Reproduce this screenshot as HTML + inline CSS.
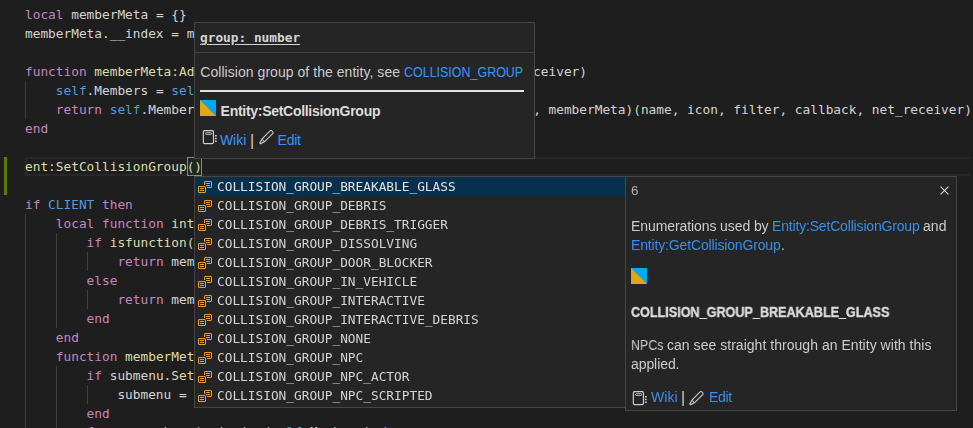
<!DOCTYPE html>
<html lang="en"><head><meta charset="utf-8"><title>editor</title>
<style>
html,body{margin:0;padding:0;overflow:hidden;}
body{width:973px;height:428px;overflow:hidden;background:#1e1e1e;position:relative;}
.a{position:absolute;}
.m{font-family:'DejaVu Sans Mono', 'Liberation Mono', monospace;font-size:12.8px;letter-spacing:-0.0063px;line-height:19px;height:19px;white-space:pre;color:#d4d4d4;}
.ln{position:absolute;left:25px;}
.g{position:absolute;width:1px;background:#404040;}
.t{position:absolute;white-space:pre;font-family:'Liberation Sans', 'DejaVu Sans', sans-serif;font-size:14px;line-height:19px;height:19px;color:#cccccc;}
.row{position:absolute;left:0;width:430px;height:19px;}
.row .tx{position:absolute;left:22px;top:0;}
.row svg{position:absolute;left:2px;top:1.5px;}
.box{position:absolute;background:#252526;border:1px solid #454545;}
.gs{will-change:transform;}
</style></head><body>
<div class="a" style="left:25px;top:157px;width:944px;height:15px;border:2px solid #282828;border-right:none;"></div>
<div class="a" style="left:4px;top:157px;width:3px;height:38px;background:#587c0c;"></div>
<div class="g" style="left:25px;top:81px;height:38px;"></div>
<div class="g" style="left:25px;top:214px;height:228px;"></div>
<div class="g" style="left:56px;top:233px;height:95px;"></div>
<div class="g" style="left:56px;top:366px;height:76px;"></div>
<div class="g" style="left:87px;top:252px;height:19px;"></div>
<div class="g" style="left:87px;top:290px;height:19px;"></div>
<div class="g" style="left:87px;top:385px;height:19px;"></div>
<div class="a" style="left:187px;top:157px;width:13px;height:17px;border:1px solid #888;background:#1b2a1b;"></div>
<div class="ln m" style="top:5px"><span style="color:#C586C0">local</span> memberMeta = {}</div>
<div class="ln m" style="top:24px">memberMeta.__index = memberMeta</div>
<div class="ln m" style="top:62px"><span style="color:#C586C0">function</span><span style="color:#DCDCAA"> memberMeta:AddMember</span>(name, icon, filter, callback, net_receiver)</div>
<div class="ln m" style="top:81px">    <span style="color:#569CD6">self</span>.Members = <span style="color:#569CD6">self</span>.Members <span style="color:#C586C0">or</span> {}</div>
<div class="ln m" style="top:100px">    <span style="color:#C586C0">return</span> <span style="color:#569CD6">self</span>.Members[table.insert(<span style="color:#569CD6">self</span>.Members, <span style="color:#DCDCAA">setmetatable</span>({}, memberMeta)(name, icon, filter, callback, net_receiver)</div>
<div class="ln m" style="top:119px"><span style="color:#C586C0">end</span></div>
<div class="ln m" style="top:157px"><span style="color:#DCDCAA">ent:SetCollisionGroup</span>()</div>
<div class="ln m" style="top:195px"><span style="color:#C586C0">if</span> <span style="color:#569CD6">CLIENT</span> <span style="color:#C586C0">then</span></div>
<div class="ln m" style="top:214px">    <span style="color:#C586C0">local</span> <span style="color:#C586C0">function</span> <span style="color:#DCDCAA">internalCallback</span>(member)</div>
<div class="ln m" style="top:233px">        <span style="color:#C586C0">if</span> <span style="color:#DCDCAA">isfunction</span>(member.callback) <span style="color:#C586C0">then</span></div>
<div class="ln m" style="top:252px">            <span style="color:#C586C0">return</span> member.callback</div>
<div class="ln m" style="top:271px">        <span style="color:#C586C0">else</span></div>
<div class="ln m" style="top:290px">            <span style="color:#C586C0">return</span> member.net_receiver</div>
<div class="ln m" style="top:309px">        <span style="color:#C586C0">end</span></div>
<div class="ln m" style="top:328px">    <span style="color:#C586C0">end</span></div>
<div class="ln m" style="top:347px">    <span style="color:#C586C0">function</span><span style="color:#DCDCAA"> memberMeta:BuildMenu</span>(submenu)</div>
<div class="ln m" style="top:366px">        <span style="color:#C586C0">if</span> submenu.<span style="color:#DCDCAA">SetSubMenu</span> <span style="color:#C586C0">then</span></div>
<div class="ln m" style="top:385px">            submenu = submenu:AddSubMenu()</div>
<div class="ln m" style="top:404px">        <span style="color:#C586C0">end</span></div>
<div class="ln m" style="top:422px">        <span style="color:#C586C0">for</span> _, member <span style="color:#C586C0">in</span> <span style="color:#DCDCAA">ipairs</span>(<span style="color:#569CD6">self</span>.Members) <span style="color:#C586C0">do</span></div>
<div class="box" style="left:194px;top:22px;width:339px;height:135px;"><div class="a" style="left:0;top:29px;width:339px;height:1px;background:#454545;"></div></div>
<div class="a m" style="left:200px;top:28px;font-weight:bold;text-decoration:underline;text-underline-offset:1.5px;">group: number</div>
<div class="a" style="left:200px;top:90px;width:324px;height:2px;background:#e4e4e4;"></div>
<svg class="a" style="left:200px;top:100px" width="16" height="16" viewBox="0 0 16 16"><rect width="16" height="16" fill="#00a8f3"/><polygon points="0,0 16,16 0,16" fill="#e0a70f"/></svg>
<svg class="a" style="left:201.5px;top:130px" width="16" height="16" viewBox="0 0 16 16" fill="none" stroke="#cfcfcf"><rect x="1.35" y="0.55" width="10.1" height="13.1" rx="1.4" stroke-width="1.15"/><rect x="3.5" y="2.7" width="6.2" height="1.7" rx="0.85" stroke-width="0.9"/><path d="M12.9 5.7h1.8M12.9 8.5h1.8M12.9 11.3h1.8" stroke-width="1.4"/></svg>
<svg class="a" style="left:257.66px;top:129.2px" width="16.64" height="16.64" viewBox="0 0 16 16"><path fill="#c5c5c5" d="M13.23 1h-1.46L3.52 9.25l-.16.22L1 13.59 2.41 15l4.12-2.36.22-.16L15 4.23V2.77L13.23 1zM2.41 13.59l1.51-3 1.45 1.45-2.96 1.55zm3.83-2.06L4.47 9.76l8-8 1.77 1.77-8 8z"/></svg>
<div class="box" style="left:194px;top:176px;width:431px;height:230px;border-right:none;">
<div class="row" style="top:0px;background:#06304d;"><svg width="16" height="16" viewBox="0 0 16 16"><path fill="#EE9D28" fill-rule="evenodd" d="M14 2H8L7 3v3h1V3h6v5h-4v1h4l1-1V3l-1-1zM9 6h4v1H9.41L9 6.59V6zM7 7H2L1 8v5l1 1h6l1-1V8L8 7H7zm1 6H2V8h6v5zM3 9h4v1H3V9zm0 2h4v1H3v-1zm6-7h4v1H9V4z"/></svg><div class="tx m gs" style="color:#e2e2e2">COLLISION_GROUP_BREAKABLE_GLASS</div></div>
<div class="row" style="top:19px;"><svg width="16" height="16" viewBox="0 0 16 16"><path fill="#EE9D28" fill-rule="evenodd" d="M14 2H8L7 3v3h1V3h6v5h-4v1h4l1-1V3l-1-1zM9 6h4v1H9.41L9 6.59V6zM7 7H2L1 8v5l1 1h6l1-1V8L8 7H7zm1 6H2V8h6v5zM3 9h4v1H3V9zm0 2h4v1H3v-1zm6-7h4v1H9V4z"/></svg><div class="tx m gs">COLLISION_GROUP_DEBRIS</div></div>
<div class="row" style="top:38px;"><svg width="16" height="16" viewBox="0 0 16 16"><path fill="#EE9D28" fill-rule="evenodd" d="M14 2H8L7 3v3h1V3h6v5h-4v1h4l1-1V3l-1-1zM9 6h4v1H9.41L9 6.59V6zM7 7H2L1 8v5l1 1h6l1-1V8L8 7H7zm1 6H2V8h6v5zM3 9h4v1H3V9zm0 2h4v1H3v-1zm6-7h4v1H9V4z"/></svg><div class="tx m gs">COLLISION_GROUP_DEBRIS_TRIGGER</div></div>
<div class="row" style="top:57px;"><svg width="16" height="16" viewBox="0 0 16 16"><path fill="#EE9D28" fill-rule="evenodd" d="M14 2H8L7 3v3h1V3h6v5h-4v1h4l1-1V3l-1-1zM9 6h4v1H9.41L9 6.59V6zM7 7H2L1 8v5l1 1h6l1-1V8L8 7H7zm1 6H2V8h6v5zM3 9h4v1H3V9zm0 2h4v1H3v-1zm6-7h4v1H9V4z"/></svg><div class="tx m gs">COLLISION_GROUP_DISSOLVING</div></div>
<div class="row" style="top:76px;"><svg width="16" height="16" viewBox="0 0 16 16"><path fill="#EE9D28" fill-rule="evenodd" d="M14 2H8L7 3v3h1V3h6v5h-4v1h4l1-1V3l-1-1zM9 6h4v1H9.41L9 6.59V6zM7 7H2L1 8v5l1 1h6l1-1V8L8 7H7zm1 6H2V8h6v5zM3 9h4v1H3V9zm0 2h4v1H3v-1zm6-7h4v1H9V4z"/></svg><div class="tx m gs">COLLISION_GROUP_DOOR_BLOCKER</div></div>
<div class="row" style="top:95px;"><svg width="16" height="16" viewBox="0 0 16 16"><path fill="#EE9D28" fill-rule="evenodd" d="M14 2H8L7 3v3h1V3h6v5h-4v1h4l1-1V3l-1-1zM9 6h4v1H9.41L9 6.59V6zM7 7H2L1 8v5l1 1h6l1-1V8L8 7H7zm1 6H2V8h6v5zM3 9h4v1H3V9zm0 2h4v1H3v-1zm6-7h4v1H9V4z"/></svg><div class="tx m gs">COLLISION_GROUP_IN_VEHICLE</div></div>
<div class="row" style="top:114px;"><svg width="16" height="16" viewBox="0 0 16 16"><path fill="#EE9D28" fill-rule="evenodd" d="M14 2H8L7 3v3h1V3h6v5h-4v1h4l1-1V3l-1-1zM9 6h4v1H9.41L9 6.59V6zM7 7H2L1 8v5l1 1h6l1-1V8L8 7H7zm1 6H2V8h6v5zM3 9h4v1H3V9zm0 2h4v1H3v-1zm6-7h4v1H9V4z"/></svg><div class="tx m gs">COLLISION_GROUP_INTERACTIVE</div></div>
<div class="row" style="top:133px;"><svg width="16" height="16" viewBox="0 0 16 16"><path fill="#EE9D28" fill-rule="evenodd" d="M14 2H8L7 3v3h1V3h6v5h-4v1h4l1-1V3l-1-1zM9 6h4v1H9.41L9 6.59V6zM7 7H2L1 8v5l1 1h6l1-1V8L8 7H7zm1 6H2V8h6v5zM3 9h4v1H3V9zm0 2h4v1H3v-1zm6-7h4v1H9V4z"/></svg><div class="tx m gs">COLLISION_GROUP_INTERACTIVE_DEBRIS</div></div>
<div class="row" style="top:152px;"><svg width="16" height="16" viewBox="0 0 16 16"><path fill="#EE9D28" fill-rule="evenodd" d="M14 2H8L7 3v3h1V3h6v5h-4v1h4l1-1V3l-1-1zM9 6h4v1H9.41L9 6.59V6zM7 7H2L1 8v5l1 1h6l1-1V8L8 7H7zm1 6H2V8h6v5zM3 9h4v1H3V9zm0 2h4v1H3v-1zm6-7h4v1H9V4z"/></svg><div class="tx m gs">COLLISION_GROUP_NONE</div></div>
<div class="row" style="top:171px;"><svg width="16" height="16" viewBox="0 0 16 16"><path fill="#EE9D28" fill-rule="evenodd" d="M14 2H8L7 3v3h1V3h6v5h-4v1h4l1-1V3l-1-1zM9 6h4v1H9.41L9 6.59V6zM7 7H2L1 8v5l1 1h6l1-1V8L8 7H7zm1 6H2V8h6v5zM3 9h4v1H3V9zm0 2h4v1H3v-1zm6-7h4v1H9V4z"/></svg><div class="tx m gs">COLLISION_GROUP_NPC</div></div>
<div class="row" style="top:190px;"><svg width="16" height="16" viewBox="0 0 16 16"><path fill="#EE9D28" fill-rule="evenodd" d="M14 2H8L7 3v3h1V3h6v5h-4v1h4l1-1V3l-1-1zM9 6h4v1H9.41L9 6.59V6zM7 7H2L1 8v5l1 1h6l1-1V8L8 7H7zm1 6H2V8h6v5zM3 9h4v1H3V9zm0 2h4v1H3v-1zm6-7h4v1H9V4z"/></svg><div class="tx m gs">COLLISION_GROUP_NPC_ACTOR</div></div>
<div class="row" style="top:209px;"><svg width="16" height="16" viewBox="0 0 16 16"><path fill="#EE9D28" fill-rule="evenodd" d="M14 2H8L7 3v3h1V3h6v5h-4v1h4l1-1V3l-1-1zM9 6h4v1H9.41L9 6.59V6zM7 7H2L1 8v5l1 1h6l1-1V8L8 7H7zm1 6H2V8h6v5zM3 9h4v1H3V9zm0 2h4v1H3v-1zm6-7h4v1H9V4z"/></svg><div class="tx m gs">COLLISION_GROUP_NPC_SCRIPTED</div></div>
</div>
<div class="box" style="left:625px;top:176px;width:330px;height:233px;"></div>
<svg class="a" style="left:631px;top:268px" width="16" height="16" viewBox="0 0 16 16"><rect width="16" height="16" fill="#00a8f3"/><polygon points="0,0 16,16 0,16" fill="#e0a70f"/></svg>
<svg class="a" style="left:632px;top:390.6px" width="16" height="16" viewBox="0 0 16 16" fill="none" stroke="#cfcfcf"><rect x="1.35" y="0.55" width="10.1" height="13.1" rx="1.4" stroke-width="1.15"/><rect x="3.5" y="2.7" width="6.2" height="1.7" rx="0.85" stroke-width="0.9"/><path d="M12.9 5.7h1.8M12.9 8.5h1.8M12.9 11.3h1.8" stroke-width="1.4"/></svg>
<svg class="a" style="left:688.46px;top:389.66px" width="16.64" height="16.64" viewBox="0 0 16 16"><path fill="#c5c5c5" d="M13.23 1h-1.46L3.52 9.25l-.16.22L1 13.59 2.41 15l4.12-2.36.22-.16L15 4.23V2.77L13.23 1zM2.41 13.59l1.51-3 1.45 1.45-2.96 1.55zm3.83-2.06L4.47 9.76l8-8 1.77 1.77-8 8z"/></svg>
<svg class="a" style="left:940.2px;top:185.5px" width="9" height="9" viewBox="0 0 9 9"><path d="M0.6 0.6L8.4 8.4M8.4 0.6L0.6 8.4" stroke="#cccccc" stroke-width="1.2" fill="none"/></svg>
<div class="t" style="left:200.30px;top:62.87px;letter-spacing:0.046px;">Collision group of the entity, see </div>
<div class="t" style="left:404.00px;top:62.87px;color:#3794ff;transform:scaleX(0.8907);transform-origin:0 0;">COLLISION_GROUP</div>
<div class="t" style="left:220.60px;top:101.87px;color:#dddddd;letter-spacing:-0.286px;font-weight:bold;">Entity:SetCollisionGroup</div>
<div class="t" style="left:219.90px;top:130.87px;color:#3794ff;letter-spacing:-0.009px;">Wiki</div>
<div class="t" style="left:250.10px;top:130.71px;font-size:16px;">|</div>
<div class="t" style="left:277.60px;top:130.87px;color:#3794ff;letter-spacing:-0.281px;">Edit</div>
<div class="t gs" style="left:630.80px;top:181.47px;color:#b0b0b0;font-size:13.4px;">6</div>
<div class="t gs" style="left:630.60px;top:216.87px;letter-spacing:-0.091px;">Enumerations used by </div>
<div class="t gs" style="left:771.90px;top:216.87px;color:#3a8ee8;letter-spacing:-0.173px;">Entity:SetCollisionGroup</div>
<div class="t gs" style="left:923.30px;top:216.87px;letter-spacing:0.047px;">and</div>
<div class="t gs" style="left:631.00px;top:235.87px;color:#3a8ee8;letter-spacing:-0.154px;">Entity:GetCollisionGroup</div>
<div class="t gs" style="left:780.80px;top:235.87px;">.</div>
<div class="t gs" style="left:631.00px;top:302.87px;color:#dddddd;transform:scaleX(0.9002);transform-origin:0 0;font-weight:bold;-webkit-text-stroke:0.4px;">COLLISION_GROUP_BREAKABLE_GLASS</div>
<div class="t gs" style="left:631.20px;top:335.87px;transform:scaleX(0.8874);transform-origin:0 0;">NPCs </div>
<div class="t gs" style="left:667.10px;top:335.87px;letter-spacing:0.033px;">can see straight through an Entity with this</div>
<div class="t gs" style="left:631.20px;top:354.87px;letter-spacing:-0.081px;">applied.</div>
<div class="t gs" style="left:650.70px;top:387.87px;color:#3a8ee8;letter-spacing:0.091px;">Wiki</div>
<div class="t gs" style="left:680.80px;top:387.71px;font-size:16px;">|</div>
<div class="t gs" style="left:709.20px;top:387.87px;color:#3a8ee8;letter-spacing:-0.356px;">Edit</div>
</body></html>
